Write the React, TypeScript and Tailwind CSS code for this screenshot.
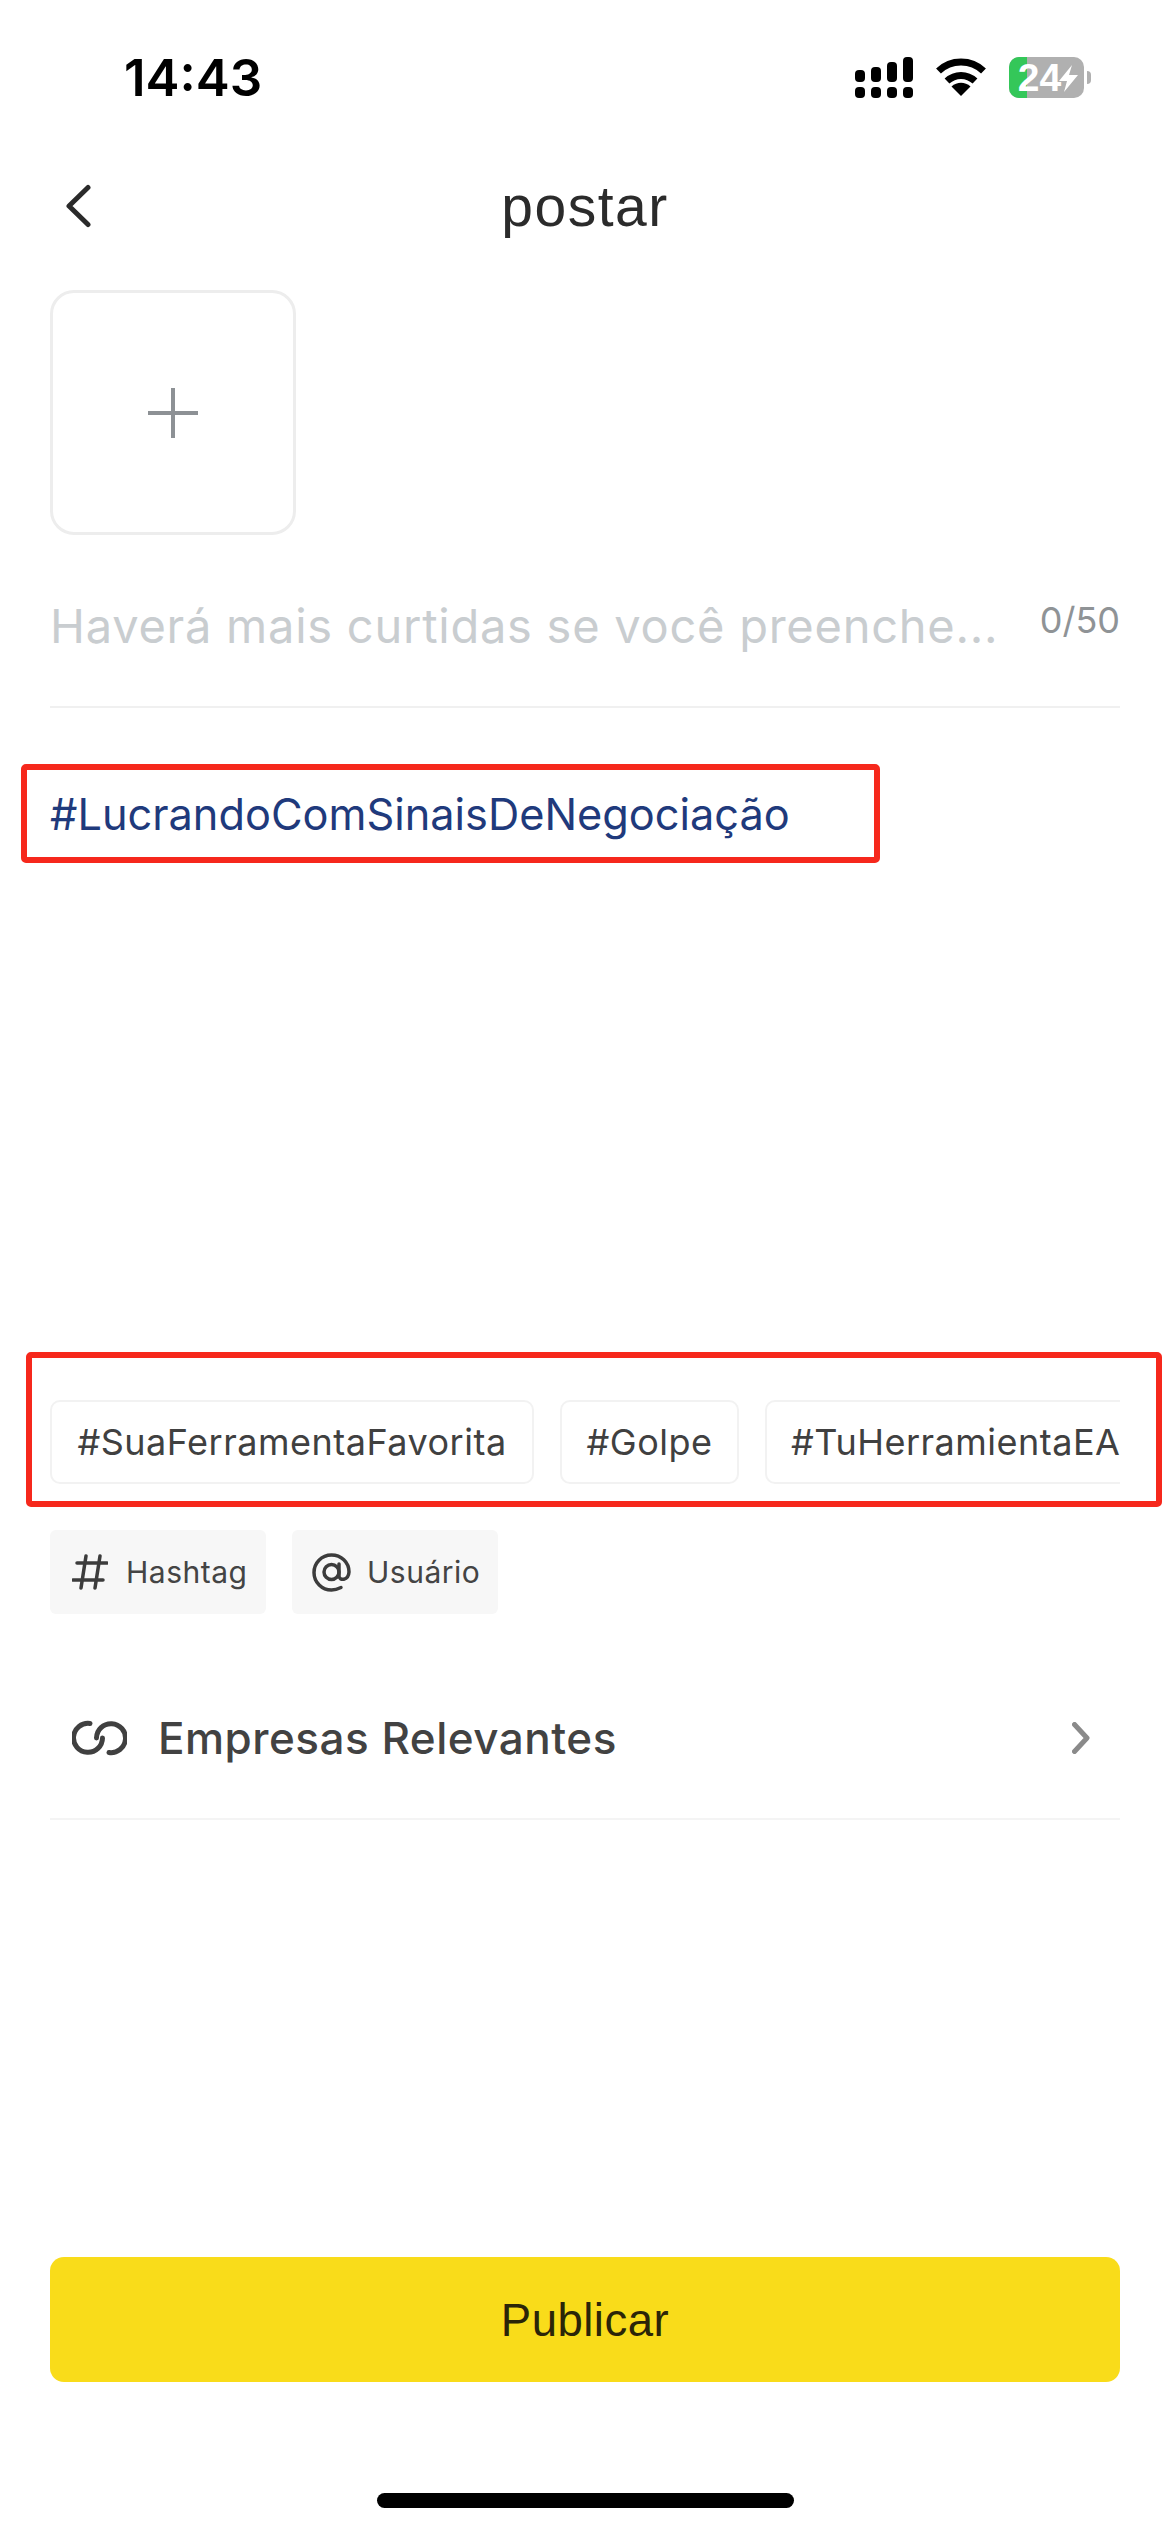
export default function App() {
  return (
    <div className="w-[1170px] h-[2532px] bg-white flex flex-col overflow-hidden font-['Inter',sans-serif] text-[#333]">
      {/* status bar */}
      <div className="h-[154px] flex justify-between items-center pl-[124px] pr-[79px] shrink-0">
        <span className="text-[51px] font-semibold text-black leading-none">14:43</span>
        <div className="flex items-center gap-[23px]">
          <svg width="58" height="41" viewBox="0 0 58 41" fill="#000">
            <rect x="0" y="13" width="10" height="12" rx="4" />
            <rect x="16" y="10" width="10" height="15" rx="4" />
            <rect x="32" y="5" width="10" height="20" rx="4" />
            <rect x="48" y="0" width="10" height="25" rx="4" />
            <rect x="0" y="30" width="10" height="11" rx="4" />
            <rect x="16" y="30" width="10" height="11" rx="4" />
            <rect x="32" y="30" width="10" height="11" rx="4" />
            <rect x="48" y="30" width="10" height="11" rx="4" />
          </svg>
          <svg width="50" height="38" viewBox="0 0 50 38" fill="none" stroke="#000" strokeWidth="7">
            <path d="M2.500 13 C15 1 35 1 47.500 13" />
            <path d="M11 23 C19 15.500 31 15.500 39 23" />
            <path d="M15.500 28.500 L25 38 L34.500 28.500 C29 23.500 21 23.500 15.500 28.500 Z" fill="#000" stroke="none" />
          </svg>
          <div className="flex items-center gap-[3px]">
            <div className="relative w-[75px] h-[41px] rounded-[10px] bg-[#b0b0b0] overflow-hidden flex items-center justify-center">
              <div className="absolute left-0 top-0 bottom-0 w-[18px] bg-[#34c759]" />
              <span className="relative text-[39px] font-bold text-white font-['Liberation_Sans',sans-serif] leading-none -ml-[14px]">24</span>
              <svg className="absolute right-[6px] top-[8px]" width="19" height="27" viewBox="0 0 19 27" fill="#fff">
                <path d="M13 0 L0 16 H8 L5 27 L19 10 H10 Z" />
              </svg>
            </div>
            <div className="w-[4px] h-[13px] rounded-r-full bg-[#b0b0b0]" />
          </div>
        </div>
      </div>

      {/* nav */}
      <div className="h-[104px] relative flex items-center justify-center shrink-0">
        <svg className="absolute left-[64px] top-[30px]" width="28" height="44" viewBox="0 0 28 44" fill="none" stroke="#2a2a2a" strokeWidth="5" strokeLinecap="round" strokeLinejoin="round">
          <path d="M24 3.500 L5 22 L24 40.500" />
        </svg>
        <span className="text-[57px] text-[#2b2b2b] font-['Liberation_Sans',sans-serif] leading-none tracking-[1.5px]">postar</span>
      </div>

      {/* content */}
      <div className="px-[50px] flex flex-col mt-[32px]">
        <div className="w-[246px] h-[245px] rounded-[24px] border-[3px] border-[#ededed] flex items-center justify-center">
          <svg width="50" height="50" viewBox="0 0 50 50" stroke="#8d9195" strokeWidth="4">
            <path d="M25 0 V50 M0 25 H50" />
          </svg>
        </div>

        <div className="h-[173px] flex justify-between border-b-2 border-[#f0f0f0]">
          <span className="text-[47px] text-[#c9cdd0] mt-[63px] leading-[56px] whitespace-nowrap tracking-[0.75px]">Haverá mais curtidas se você preenche...</span>
          <span className="text-[36px] text-[#8f9396] mt-[63px] leading-[44px]">0/50</span>
        </div>

        <div className="relative mt-[56px] h-[99px] flex items-center">
          <div className="absolute -left-[29px] top-0 w-[859px] h-[99px] border-[6px] border-[#f6281c] rounded-[5px]" />
          <span className="text-[43.300px] text-[#1f3a7c] leading-none whitespace-nowrap mt-[2px]">#LucrandoComSinaisDeNegociação</span>
        </div>

        {/* suggestions */}
        <div className="relative mt-[537px] h-[84px] flex gap-[26px] overflow-visible">
          <div className="absolute -left-[24px] -top-[48px] w-[1136px] h-[155px] border-[6px] border-[#f6281c] rounded-[5px]" />
          <div className="h-[84px] w-[484px] shrink-0 rounded-[10px] border-2 border-[#f2f2f2] flex items-center justify-center text-[36px] text-[#404040] tracking-[0.5px]">#SuaFerramentaFavorita</div>
          <div className="h-[84px] w-[179px] shrink-0 rounded-[10px] border-2 border-[#f2f2f2] flex items-center justify-center text-[36px] text-[#404040] tracking-[0.5px]">#Golpe</div>
          <div className="h-[84px] w-[355px] shrink-0 rounded-l-[10px] border-2 border-r-0 border-[#f2f2f2] flex items-center pl-[24px] text-[36px] text-[#404040] tracking-[0.5px] overflow-hidden whitespace-nowrap">#TuHerramientaEA</div>
        </div>

        {/* actions */}
        <div className="flex gap-[26px] mt-[46px]">
          <div className="h-[84px] w-[216px] bg-[#f7f7f7] rounded-[6px] flex items-center pl-[22px] gap-[18px]">
            <svg width="36" height="36" viewBox="0 0 36 36" fill="none" stroke="#3c3c3c" strokeWidth="3.500" strokeLinecap="round">
              <path d="M14 2 L9 34 M28 2 L23 34 M5 9 H35 M1 26 H31" />
            </svg>
            <span className="text-[30px] text-[#444] tracking-[0.5px]">Hashtag</span>
          </div>
          <div className="h-[84px] w-[206px] bg-[#f7f7f7] rounded-[6px] flex items-center pl-[20px] gap-[16px]">
            <svg width="39" height="39" viewBox="0 0 39 39" fill="none" stroke="#3c3c3c" strokeWidth="3.500" strokeLinecap="round">
              <circle cx="19.500" cy="19" r="7.500" />
              <path d="M27 11 V23 C27 28 36.500 28 37 19 C37 9 29 2 19.500 2 C9.500 2 2 10 2 19.500 C2 29.500 10 37 19.500 37 C23 37 26 36 29 34.500" />
            </svg>
            <span className="text-[30px] text-[#444] tracking-[0.5px]">Usuário</span>
          </div>
        </div>

        {/* row */}
        <div className="h-[206px] flex items-center border-b-2 border-[#f4f4f4] pl-[22px] pr-[30px] pt-[44px]">
          <svg width="55" height="36" viewBox="0 0 55 36" fill="none" stroke="#404040" strokeWidth="5" strokeLinecap="round">
            <path d="M18 3.500 A14.500 14.500 0 1 0 30.500 18" />
            <path d="M24.500 18 A14.500 14.500 0 1 1 37 32.500" />
          </svg>
          <span className="ml-[31px] text-[44px] font-medium text-[#424242] flex-1 tracking-[0.5px]">Empresas Relevantes</span>
          <svg width="18" height="32" viewBox="0 0 18 32" fill="none" stroke="#8a8a8a" strokeWidth="5" strokeLinecap="round" strokeLinejoin="round">
            <path d="M2.500 2.500 L15 16 L2.500 29.500" />
          </svg>
        </div>

        {/* button */}
        <div className="mt-[437px] h-[125px] rounded-[14px] bg-[#f9dc1a] flex items-center justify-center">
          <span className="text-[45.500px] text-[#2b2508] font-['Liberation_Sans',sans-serif] tracking-[0.5px] mt-[4px]">Publicar</span>
        </div>

        {/* home indicator */}
        <div className="mt-[111px] self-center w-[417px] h-[15px] rounded-full bg-black" />
      </div>
    </div>
  );
}
